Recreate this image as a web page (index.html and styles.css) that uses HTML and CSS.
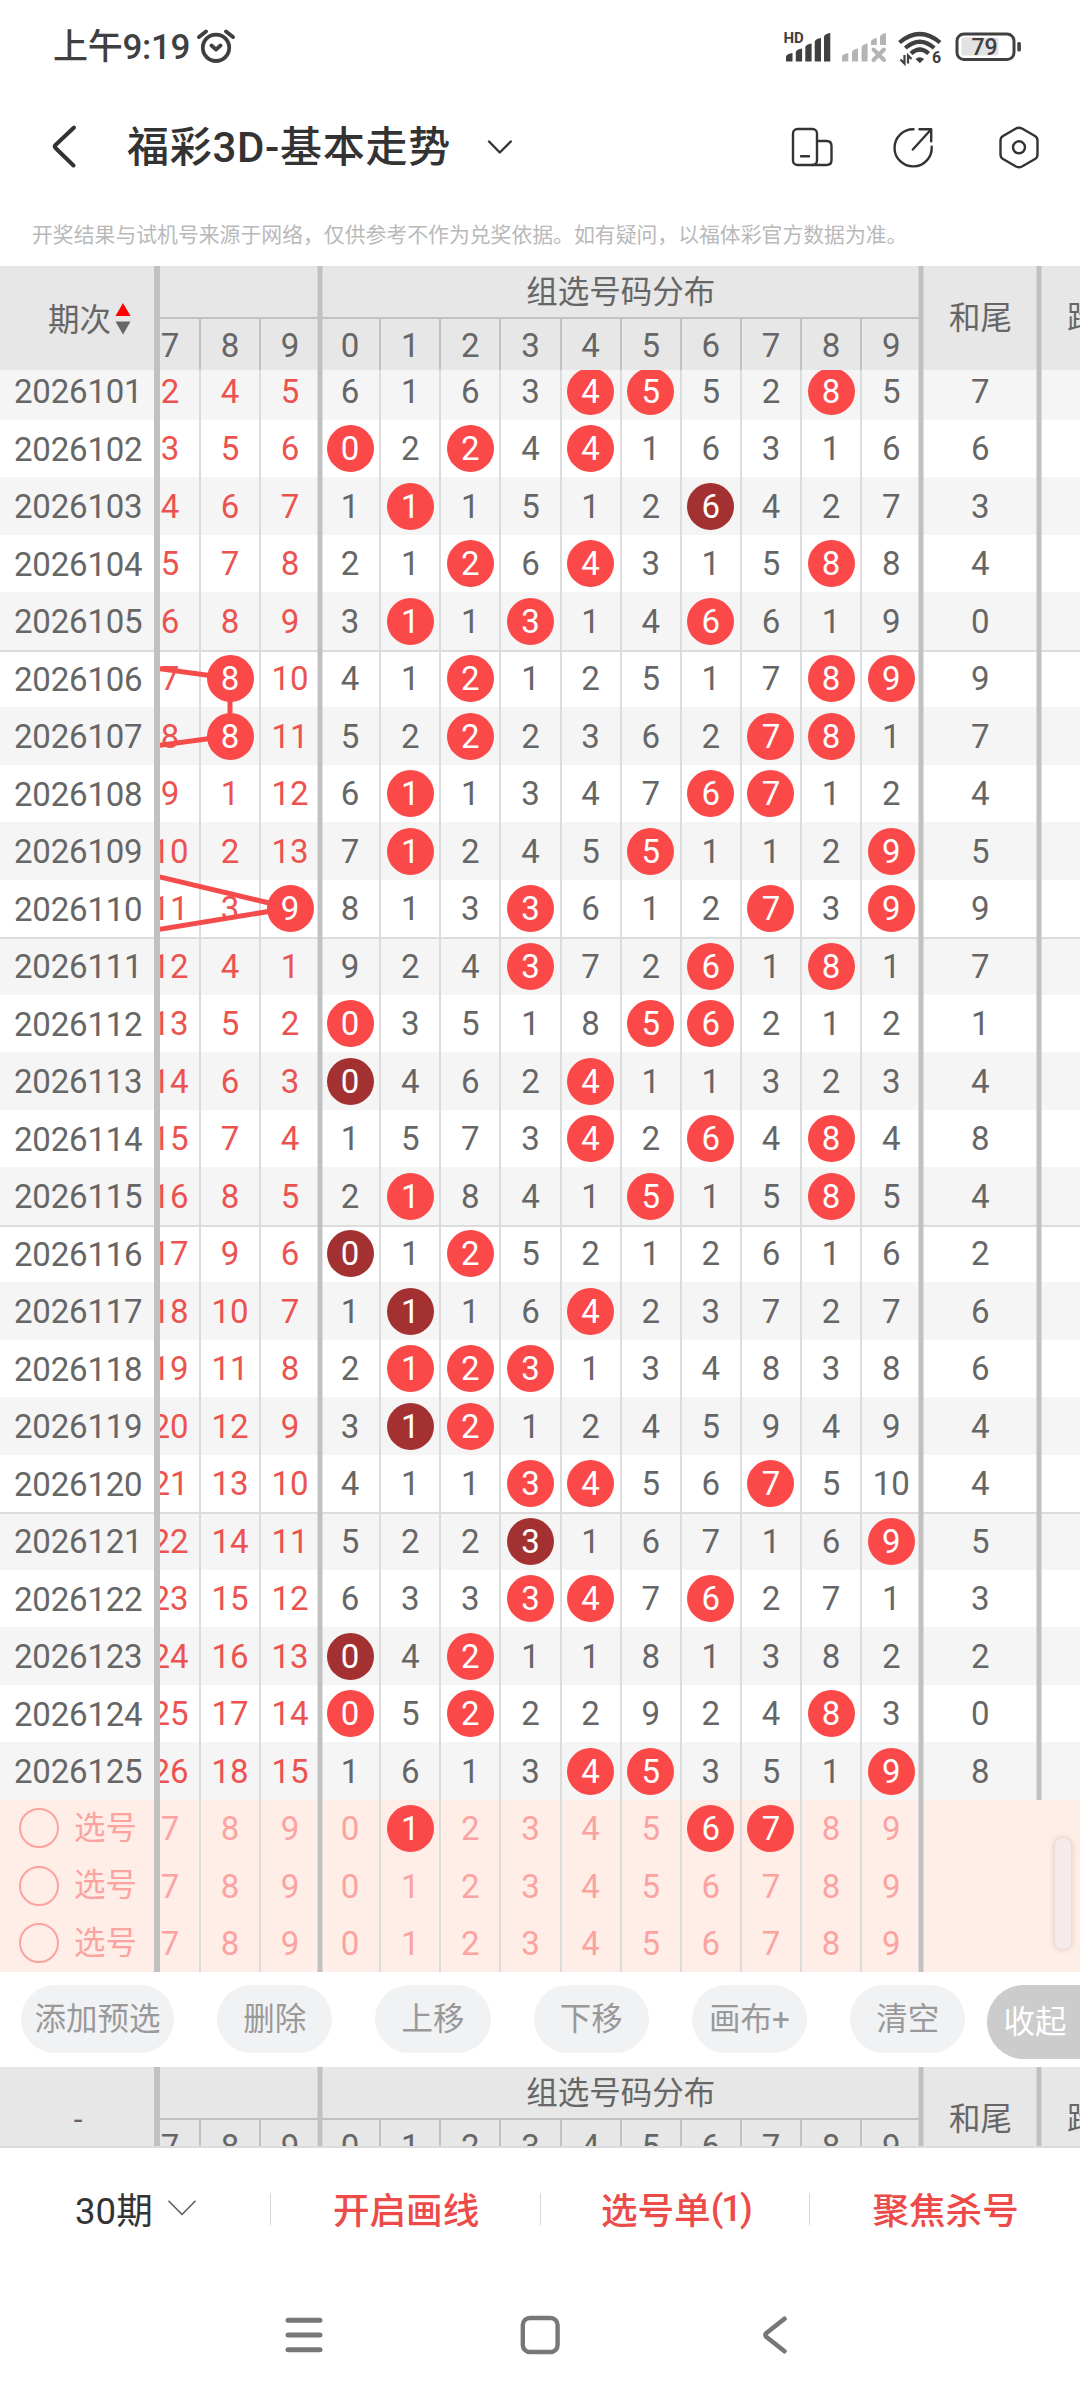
FILE: index.html
```html
<!DOCTYPE html>
<html lang="zh-CN">
<head>
<meta charset="utf-8">
<title>福彩3D-基本走势</title>
<link rel="stylesheet" href="styles.css">
</head>
<body>
<div class="screen">
  <header class="status">
    <div class="status-left">
      <span class="clock">上午9:19</span>
      <svg class="alarm" width="40" height="36" viewBox="196 29 40 36" fill="none" stroke="#404040" stroke-width="3.8" stroke-linecap="round" stroke-linejoin="round"><circle cx="216" cy="47.8" r="13.2"/><path d="M199 37 206 31.5M226 31.5 233 37M211.500 45.500 216 49.500 220.500 45.500"/></svg>
    </div>
    <svg class="status-icons" width="240" height="40" viewBox="782 28 240 40">
      <text x="783.500" y="43" class="svg-hd">HD</text>
      <g fill="#404040">
        <path d="M786 61.500v-5q1-3 6.500-3.500v8.500zM795.800 61.500V52q1-3 6.300-3.500v13zM805.300 61.500V47q1-3 6.300-3.500v18zM814.700 61.500V41.500q1-3 6.300-3.500v23.500zM824 61.500V36.500q1-3 6.300-3.500v28.500z"/>
      </g>
      <path fill="#b4b4b4" d="M842 61.500v-5q1-3 6.300-3.500v8.500zM852 61.500V52q1-3 6-3.500v13zM861.600 61.500V47q1-3 6-3.500v18zM871 45v-3.500q1-3 5.800-3.500v7zM880 45v-8.500q1-3 6-3.500v12z"/>
      <path d="M873.500 49.500 884 60M884 49.500 873.500 60" stroke="#b4b4b4" stroke-width="4" stroke-linecap="round"/>
      <g fill="none" stroke="#404040" stroke-width="4.200">
        <path d="M899.500 42.500Q919.800 25.500 940 42.500M905.300 48Q919.800 35.500 934.300 48M911 53.500Q919.800 45.500 928.600 53.500"/>
      </g>
      <path d="M915.500 59q4.300-3.500 8.600 0l-4.300 4.200z" fill="#404040"/>
      <path d="M904.500 55v8.500l-4-4M908 63.500v-8l3.500 3.500" fill="none" stroke="#404040" stroke-width="2.200"/>
      <text x="932" y="63" class="svg-six">6</text>
      <rect x="957" y="34" width="57" height="25.500" rx="7" fill="none" stroke="#404040" stroke-width="3"/>
      <rect x="961.500" y="37.500" width="37" height="18" rx="2" fill="#e2e2e2"/>
      <rect x="1017.300" y="42" width="3.600" height="9.500" rx="1.500" fill="#404040"/>
      <text x="984.500" y="55" text-anchor="middle" class="svg-battery">79</text>
    </svg>
  </header>

  <nav class="titlebar">
    <svg class="back" width="28" height="46" viewBox="50 124 28 46" fill="none" stroke="#333" stroke-width="4" stroke-linecap="round" stroke-linejoin="round"><path d="M74 127.500 55.500 145Q54 146.500 55.500 148L73.500 165.500"/></svg>
    <h1>福彩3D-基本走势</h1>
    <svg class="down" width="28" height="18" viewBox="486 137 28 18" fill="none" stroke="#333" stroke-width="2.400" stroke-linecap="round" stroke-linejoin="round"><path d="M489 140.500 499.800 151.500 510.800 140.500"/></svg>
    <svg class="title-icons" width="256" height="48" viewBox="788 123 256 48" fill="none" stroke="#333" stroke-width="2.400" stroke-linecap="round" stroke-linejoin="round">
      <rect x="793" y="129" width="24" height="36" rx="4.500"/><path d="M817 141h9.500q5 0 5 5v14q0 5-5 5h-14M801 156.300h8"/>
      <path d="M913.500 129.200A18.600 18.600 0 1 0 931.700 146.700M919.500 129.300h11.700v12M931 129.500 912.800 149.500"/>
      <path d="M1016 128.500q3-1.500 6 0l13 7.500q2.500 1.500 2.500 4.500v14q0 3-2.500 4.500l-13 7.500q-3 1.500-6 0l-13-7.500q-2.500-1.500-2.500-4.500v-14q0-3 2.500-4.500z"/><circle cx="1019" cy="147.300" r="6"/>
    </svg>
  </nav>
  <p class="notice">开奖结果与试机号来源于网络，仅供参考不作为兑奖依据。如有疑问，以福体彩官方数据为准。</p>

  <section class="thead">
    <div class="period-head"><span>期次</span><svg width="16" height="32" viewBox="0 0 16 32"><path d="M8 0 15.500 13H.5z" fill="#f00"/><path d="M8 31.500 15.500 18.500H.5z" fill="#666"/></svg></div>
    <div class="head-scroll"></div>
  </section>

  <section class="tbody">
    <div class="rows"></div>
    <svg class="trend" width="160" height="300" viewBox="160 650 160 300" fill="none" stroke="#f64b4b" stroke-width="5"><path d="M158 668.500 230 678.200V735.700L158 745.500M158 876.500 290 908 158 929.500"/></svg>
    <div class="thumb"></div>
  </section>

  <div class="tools">
    <span class="pill wide">添加预选</span><span class="pill">删除</span><span class="pill">上移</span><span class="pill">下移</span><span class="pill">画布+</span><span class="pill">清空</span><span class="fold">收起</span>
  </div>

  <section class="thead bottom">
    <div class="period-head dash">-</div>
    <div class="head-scroll"></div>
  </section>

  <div class="actions">
    <div class="act dark">30期<svg width="28" height="16" viewBox="0 0 28 16" fill="none" stroke="#555" stroke-width="1.400"><path d="M.5.800 14 14.500 27.500.800"/></svg></div>
    <div class="act">开启画线</div>
    <div class="act">选号单<span class="count">(1)</span></div>
    <div class="act">聚焦杀号</div>
  </div>

  <footer class="sysnav">
    <svg width="38" height="40" viewBox="0 0 38 40" stroke="#777" stroke-width="5" stroke-linecap="round"><path d="M3 5.200h32M3 20h32M3 34.800h32"/></svg>
    <svg width="40" height="40" viewBox="0 0 40 40" fill="none" stroke="#777" stroke-width="4.400"><rect x="2.800" y="3" width="34.800" height="34" rx="7"/></svg>
    <svg width="26" height="40" viewBox="0 0 26 40" fill="none" stroke="#777" stroke-width="4.600" stroke-linecap="round" stroke-linejoin="round"><path d="M22.500 3.800 4.500 18Q2.500 20 4.500 22L22.500 36.200"/></svg>
  </footer>
</div>
<script src="script.js"></script>
</body>
</html>
```
FILE: styles.css
```css
* { box-sizing: border-box; }
body { margin: 0; background: #fff; }
.screen {
  width: 1080px;
  height: 2400px;
  overflow: hidden;
  display: flex;
  flex-direction: column;
  background: #fff;
  color: #666;
  font-family: Roboto, "Noto Sans CJK SC", sans-serif;
}
.screen > * { flex: none; }
svg { display: block; flex: none; }

.status { height: 96px; display: flex; justify-content: space-between; align-items: flex-start; padding: 28px 58px 0 53px; }
.status-left { display: flex; }
.clock { width: 143px; padding-top: 1px; font-size: 35px; line-height: 38px; font-weight: 500; color: #404040; white-space: nowrap; letter-spacing: -.3px; }
.alarm { margin-top: 1px; }
.svg-hd { font-size: 15px; font-weight: 700; fill: #404040; }
.svg-six { font-size: 16px; font-weight: 700; fill: #404040; }
.svg-battery { font-size: 23px; font-weight: 500; fill: #404040; }

.titlebar { height: 101px; display: flex; align-items: center; padding: 0 36px 0 50px; }
.titlebar h1 { width: 358px; margin: 0 0 0 49px; padding-top: 2px; font-size: 42px; line-height: 60px; font-weight: 500; color: #333; white-space: nowrap; letter-spacing: .7px; }
.title-icons { margin-left: auto; }
.down { margin-left: 1px; }
.notice { margin: 0; height: 69px; padding: 18px 0 0 32px; font-size: 20.850px; line-height: 41px; color: #b9b9b9; white-space: nowrap; }

.thead { height: 104px; display: flex; background: #e7e7e7; overflow: hidden; }
.thead.bottom { height: 81px; border-bottom: 2px solid #dcdcdc; }
.period-head { width: 154px; height: 104px; padding-left: 25px; display: flex; align-items: center; justify-content: center; gap: 4px; font-size: 31.500px; }
.period-head span { padding-bottom: 2px; }
.period-head svg { margin-top: 1px; }
.period-head.dash { padding: 0 0 0 2px; }
.head-scroll, .scroll { width: 926px; border-left: 6px solid #c1c1c1; overflow: hidden; }
.head-track { width: 1022px; margin-left: -20px; display: flex; }
.group-head { height: 104px; }
.group-head.tail { width: 180px; }
.group-head.dist { width: 601.300px; }
.group-title { height: 53px; border-bottom: 2px solid #c1c1c1; font-size: 31.500px; line-height: 54px; text-align: center; }
.group-cells { display: flex; }
.group-cells .cell { height: 51px; line-height: 53px; padding-top: 1px; box-shadow: 1px 0 #c1c1c1, inset -1px 0 #c1c1c1; }
.group-cells .cell:last-child { box-shadow: none; }
.thick { box-shadow: 2.500px 0 #c1c1c1, inset -2.500px 0 #c1c1c1; }
.plain-head { width: 118.200px; height: 104px; line-height: 106px; font-size: 31.500px; text-align: center; white-space: nowrap; }

.tbody { position: relative; height: 1602px; overflow: hidden; }
.rows { margin-top: -8px; }
.row { height: 57.500px; display: flex; background: #fff; }
.row:nth-child(odd) { background: #f5f5f5; }
.row.rule { box-shadow: inset 0 2px #dcdcdc; }
.row.pick, .row.pick:nth-child(odd) { background: #ffeee7; color: #fba3a1; }
.period { width: 154px; padding-left: 14px; font-size: 33px; line-height: 59px; letter-spacing: -.2px; }
.pick .period { display: flex; align-items: center; gap: 15px; padding-left: 19px; font-size: 31.500px; line-height: 57.500px; letter-spacing: 0; }
.ring { width: 40px; height: 40px; border: 2px solid #fba3a1; border-radius: 50%; }
.track { width: 1022px; margin-left: -20px; display: flex; }
.cell { width: 60.130px; height: 57.500px; padding-top: 1px; font-size: 33px; line-height: 57.500px; display: flex; justify-content: center; align-items: center; box-shadow: 1px 0 #dcdcdc, inset -1px 0 #dcdcdc; }
.cell.red, .tail .cell { width: 60px; }
.cell.red { color: #ec5350; }
.pick .cell.red { color: inherit; }
.cell.end, .cell.sum { box-shadow: 2.500px 0 #c1c1c1, inset -2.500px 0 #c1c1c1; }
.cell.sum { width: 118.200px; }
.pick .cell.sum { box-shadow: none; }
.ball { position: relative; z-index: 2; width: 47px; height: 47px; border-radius: 50%; background: #fb4848; color: #fff; line-height: 48px; text-align: center; }
.ball.repeat { background: #a33131; }
.trend { position: absolute; left: 160px; top: 280px; z-index: 1; }
.thumb { position: absolute; left: 1055px; top: 1468px; width: 16px; height: 111px; border-radius: 8px; background: #f5eaec; box-shadow: 0 0 5px 2px rgba(180, 150, 145, .3); }

.tools { height: 95px; display: flex; align-items: flex-start; gap: 43px; padding: 13px 0 0 21px; font-size: 31.500px; color: #999; overflow: hidden; }
.pill { flex: none; width: 115.300px; height: 68px; border-radius: 34px; background: #f1f2f4; line-height: 69px; text-align: center; white-space: nowrap; }
.pill.wide { width: 153px; }
.fold { flex: none; width: 140px; height: 74px; margin-left: -21px; padding-left: 16px; border-radius: 37px; background: #ccc; color: #fff; line-height: 75px; }

.actions { height: 122px; display: flex; align-items: center; font-size: 36.600px; font-weight: 500; color: #ec4b49; }
.act { width: 270px; height: 32px; padding: 0 0 2px 1px; display: flex; align-items: center; justify-content: center; box-shadow: inset -1px 0 #d8d8d8; white-space: nowrap; }
.act:last-child { box-shadow: none; }
.act.dark { width: 271px; gap: 15px; padding-left: 0; font-weight: 400; color: #333; }
.count { letter-spacing: -2px; }

.sysnav { height: 130px; display: flex; align-items: center; padding: 0 0 0 285px; }
.sysnav svg:nth-child(2) { margin-left: 197px; }
.sysnav svg:nth-child(3) { margin-left: 202px; }
```
FILE: script.js
```js
// Each row: three tail misses, ten distribution values, sum tail.
// "*" marks a drawn number, "!" a number drawn more than once.
const data = [
  "2 4 5|6 1 6 3 *4 *5 5 2 *8 5|7",
  "3 5 6|*0 2 *2 4 *4 1 6 3 1 6|6",
  "4 6 7|1 *1 1 5 1 2 !6 4 2 7|3",
  "5 7 8|2 1 *2 6 *4 3 1 5 *8 8|4",
  "6 8 9|3 *1 1 *3 1 4 *6 6 1 9|0",
  "7 *8 10|4 1 *2 1 2 5 1 7 *8 *9|9",
  "8 *8 11|5 2 *2 2 3 6 2 *7 *8 1|7",
  "9 1 12|6 *1 1 3 4 7 *6 *7 1 2|4",
  "10 2 13|7 *1 2 4 5 *5 1 1 2 *9|5",
  "11 3 *9|8 1 3 *3 6 1 2 *7 3 *9|9",
  "12 4 1|9 2 4 *3 7 2 *6 1 *8 1|7",
  "13 5 2|*0 3 5 1 8 *5 *6 2 1 2|1",
  "14 6 3|!0 4 6 2 *4 1 1 3 2 3|4",
  "15 7 4|1 5 7 3 *4 2 *6 4 *8 4|8",
  "16 8 5|2 *1 8 4 1 *5 1 5 *8 5|4",
  "17 9 6|!0 1 *2 5 2 1 2 6 1 6|2",
  "18 10 7|1 !1 1 6 *4 2 3 7 2 7|6",
  "19 11 8|2 *1 *2 *3 1 3 4 8 3 8|6",
  "20 12 9|3 !1 *2 1 2 4 5 9 4 9|4",
  "21 13 10|4 1 1 *3 *4 5 6 *7 5 10|4",
  "22 14 11|5 2 2 !3 1 6 7 1 6 *9|5",
  "23 15 12|6 3 3 *3 *4 7 *6 2 7 1|3",
  "24 16 13|!0 4 *2 1 1 8 1 3 8 2|2",
  "25 17 14|*0 5 *2 2 2 9 2 4 *8 3|0",
  "26 18 15|1 6 1 3 *4 *5 3 5 1 *9|8"
];
const picks = [
  "7 8 9|0 *1 2 3 4 5 *6 *7 8 9|",
  "7 8 9|0 1 2 3 4 5 6 7 8 9|",
  "7 8 9|0 1 2 3 4 5 6 7 8 9|"
];

function value(v) {
  if (v[0] === "*") return `<span class="ball">${v.slice(1)}</span>`;
  if (v[0] === "!") return `<span class="ball repeat">${v.slice(1)}</span>`;
  return v;
}

function cells(list, kind) {
  return list.split(" ").map((v, i, all) =>
    `<div class="cell ${kind}${i === all.length - 1 ? " end" : ""}">${value(v)}</div>`).join("");
}

function row(line, label, kind) {
  const [tail, dist, sum] = line.split("|");
  return `<div class="row ${kind}"><div class="period">${label}</div><div class="scroll"><div class="track">` +
    `${cells(tail, "red")}${cells(dist, "")}<div class="cell sum">${sum}</div></div></div></div>`;
}

document.querySelector(".rows").innerHTML =
  data.map((d, i) => row(d, 2026101 + i, i && i % 5 === 0 ? "rule" : "")).join("") +
  picks.map(d => row(d, '<i class="ring"></i>选号', "pick")).join("");

const headCells = from => Array.from({ length: 10 - from }, (_, i) => `<div class="cell">${from + i}</div>`).join("");
document.querySelectorAll(".head-scroll").forEach(el => {
  el.innerHTML = `<div class="head-track">
    <div class="group-head tail thick"><div class="group-title"></div><div class="group-cells">${headCells(7)}</div></div>
    <div class="group-head dist thick"><div class="group-title">组选号码分布</div><div class="group-cells">${headCells(0)}</div></div>
    <div class="plain-head thick">和尾</div><div class="plain-head">跨度</div></div>`;
});
```
